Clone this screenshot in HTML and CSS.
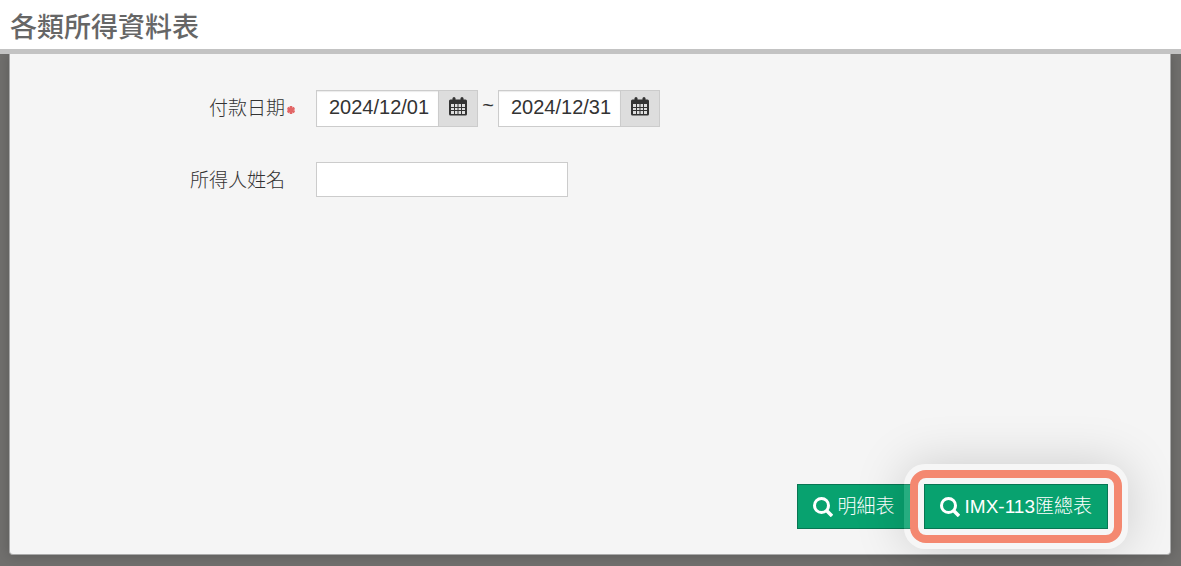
FILE: index.html
```html
<!DOCTYPE html>
<html lang="zh-Hant">
<head>
<meta charset="utf-8">
<title>各類所得資料表</title>
<link rel="stylesheet" href="styles.css">
</head>
<body>
<svg class="symbols" aria-hidden="true">
  <symbol id="calendar" viewBox="0 0 18 19">
    <path fill-rule="evenodd" d="M1.500 2.500h15q1.500 0 1.500 1.500V17q0 1.500-1.500 1.500h-15Q0 18.500 0 17V4q0-1.500 1.500-1.500zM2 7v10h14V7z"/>
    <rect x="3.500" y="0" width="3" height="4" rx="1.500"/>
    <rect x="11.500" y="0" width="3" height="4" rx="1.500"/>
    <path d="M2 10h14v1H2zM2 13h14v1H2zM5 7h1v10H5zM8.500 7h1v10h-1zM12 7h1v10h-1z"/>
  </symbol>
  <symbol id="search" viewBox="0 0 20 20">
    <circle cx="8.500" cy="8.500" r="7" fill="none" stroke="currentColor" stroke-width="3"/>
    <path d="M13.500 13.500l5.500 5.500" fill="none" stroke="currentColor" stroke-width="3.500"/>
  </symbol>
  <symbol id="required" viewBox="0 0 8 8">
    <path d="M4 0v8M.5 2l7 4M7.500 2l-7 4" stroke="currentColor" stroke-width="2.600"/>
  </symbol>
</svg>
<header class="page-header">
  <h1 class="page-title">各類所得資料表</h1>
</header>
<main class="backdrop">
  <form class="panel">
    <div class="row">
      <label class="label" for="from">付款日期<svg class="required"><use href="#required"/></svg></label>
      <div class="range">
        <div class="date">
          <input class="date-input" id="from" type="text" value="2024/12/01">
          <button class="date-button" type="button" aria-label="開始日期"><svg class="calendar"><use href="#calendar"/></svg></button>
        </div>
        <span class="tilde">~</span>
        <div class="date">
          <input class="date-input" id="to" type="text" value="2024/12/31" aria-label="結束日期">
          <button class="date-button" type="button" aria-label="結束日期"><svg class="calendar"><use href="#calendar"/></svg></button>
        </div>
      </div>
    </div>
    <div class="row">
      <label class="label" for="name">所得人姓名</label>
      <input class="name-input" id="name" type="text">
    </div>
    <div class="actions">
      <button class="action" type="button"><svg class="search"><use href="#search"/></svg>明細表</button>
      <div class="highlight">
        <button class="action" type="button"><svg class="search"><use href="#search"/></svg>IMX-113匯總表</button>
      </div>
    </div>
  </form>
</main>
</body>
</html>
```
FILE: styles.css
```css
* {
  box-sizing: border-box;
}

body {
  margin: 0;
  min-height: 100vh;
  display: flex;
  flex-direction: column;
  overflow-x: hidden;
  color: #333;
  font-family: "Liberation Sans", "Noto Sans CJK TC", sans-serif;
  font-weight: 300;
}

.symbols {
  position: absolute;
  width: 0;
  height: 0;
}

.page-header {
  padding: 8px 10px 1px;
  background: #fff;
  border-bottom: 5px solid #c3c3c3;
}

.page-title {
  margin: 0;
  color: #666;
  font-size: 27px;
  font-weight: 500;
  line-height: 40px;
}

.backdrop {
  flex: 1;
  display: flex;
  padding: 0 10px 11px 9px;
  background: #706f6d;
  overflow: hidden;
}

.panel {
  flex: 1;
  display: flex;
  flex-direction: column;
  gap: 35px;
  padding: 36px 0 25px;
  background: #f5f5f5;
  border: 1px solid #aaa;
  border-top: 0;
  border-radius: 0 0 4px 4px;
  box-shadow: 0 0 12px rgba(0, 0, 0, 0.2);
}

.row {
  display: grid;
  grid-template-columns: 25% 1fr;
  align-items: start;
  column-gap: 16px;
}

.label {
  position: relative;
  padding: 3px 15px 0 0;
  font-size: 19px;
  line-height: 32px;
  text-align: right;
}

.required {
  position: absolute;
  top: 16px;
  right: 5px;
  width: 8px;
  height: 8px;
  color: #e26565;
}

.range {
  display: flex;
}

.date {
  display: flex;
  height: 37px;
  border: 1px solid #ccc;
}

.date-input {
  width: 121px;
  padding: 0 0 2px 12px;
  border: 0;
  background: #fff;
  box-shadow: inset 0 1px 1px rgba(0, 0, 0, 0.08);
  color: #333;
  font: 400 20px "Liberation Sans", sans-serif;
}

.date-button {
  width: 39px;
  padding: 0 0 5px;
  display: flex;
  align-items: center;
  justify-content: center;
  border: 0;
  border-left: 1px solid #ccc;
  background: #ddd;
  color: #333;
}

.calendar {
  width: 18px;
  height: 19px;
  fill: currentColor;
}

.tilde {
  width: 20px;
  font-size: 20px;
  line-height: 30px;
  text-align: center;
}

.name-input {
  width: 252px;
  height: 35px;
  padding: 0 12px;
  border: 1px solid #ccc;
  background: #fff;
  font: 400 20px "Liberation Sans", sans-serif;
}

.actions {
  display: flex;
  justify-content: flex-end;
  gap: 13px;
  margin-top: auto;
  padding-right: 62px;
}

.action {
  display: flex;
  align-items: center;
  gap: 5px;
  height: 45px;
  padding: 0 15px 4px;
  border: 1px solid #087653;
  background: #08a26f;
  color: #fff;
  font-family: inherit;
  font-size: 19px;
  font-weight: 300;
  white-space: nowrap;
}

.search {
  width: 20px;
  height: 20px;
  margin-top: 5px;
}

.highlight {
  position: relative;
}

.highlight .action {
  position: relative;
  z-index: 1;
}

.highlight::before,
.highlight::after {
  content: "";
  position: absolute;
  pointer-events: none;
}

.highlight::before {
  inset: -20px;
  border-radius: 21px;
  background: rgba(255, 255, 255, 0.12);
  box-shadow: 0 0 50px rgba(0, 0, 0, 0.17);
}

.highlight::after {
  inset: -14px;
  border: 8px solid #f48870;
  border-radius: 16px;
}
```
